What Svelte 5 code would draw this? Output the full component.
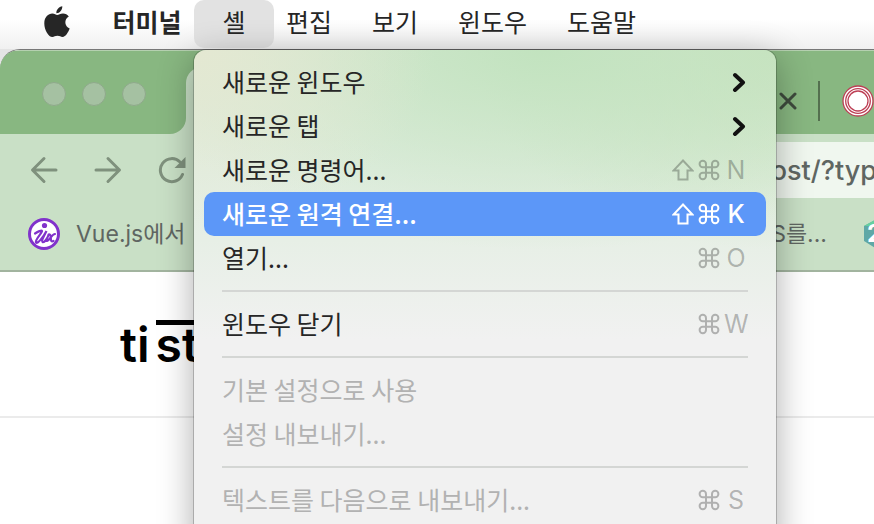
<script lang="ts">
	type MenuItem = {
		label: string;
		keys?: string;
		shift?: boolean;
		submenu?: boolean;
		disabled?: boolean;
	};

	let selected = $state('새로운 원격 연결...');

	const menus = ['편집', '보기', '윈도우', '도움말'];

	// each group is followed by a separator
	const groups: MenuItem[][] = [
		[
			{ label: '새로운 윈도우', submenu: true },
			{ label: '새로운 탭', submenu: true },
			{ label: '새로운 명령어...', keys: 'N', shift: true },
			{ label: '새로운 원격 연결...', keys: 'K', shift: true },
			{ label: '열기...', keys: 'O' }
		],
		[{ label: '윈도우 닫기', keys: 'W' }],
		[
			{ label: '기본 설정으로 사용', disabled: true },
			{ label: '설정 내보내기...', disabled: true }
		],
		[{ label: '텍스트를 다음으로 내보내기...', keys: 'S', disabled: true }]
	];
</script>

<div class="desktop">
	<header class="menubar">
		<button class="apple" aria-label="Apple">
			<svg viewBox="0 0 26 32" width="26" height="32">
				<path
					d="M18.3.2c.3 3.700-2.800 7.200-5.900 7C12 3.700 15 .7 18.300.2zM13.200 9c1.500 0 3-1.500 5.800-1.500 2.400 0 4.500 1.200 5.800 3-5.100 3-4.300 10 .9 12-1.200 3.200-4 8.500-7.200 8.500-1.900 0-2.600-1.200-5-1.200-2.500 0-3.300 1.200-5.100 1.200C4.700 31 .3 24.200.3 17.400c0-6.500 4.100-9.900 8-9.900C10.600 7.500 12 9 13.200 9z"
				/>
			</svg>
		</button>
		<button class="menu app">터미널</button>
		<div class="opened">
			<button class="menu active">셸</button>
			<div class="dropdown">
				{#each groups as group}
					<ul>
						{#each group as item}
							<li>
								<button
									class="item"
									class:selected={item.label === selected}
									disabled={item.disabled}
									onmouseenter={() => (selected = item.label)}
								>
									<span class="label">{item.label}</span>
									{#if item.submenu}
										<svg class="chevron" viewBox="0 0 14 20" width="14" height="20">
											<path d="M3 3l8 7.500-8 7.500" />
										</svg>
									{/if}
									{#if item.keys}
										<span class="keys">
											{#if item.shift}
												<svg viewBox="0 0 22 22" width="22" height="22">
													<path d="M11 1.500L20.500 11.500H15.500V20.500H6.500V11.500H1.500z" />
												</svg>
											{/if}
											<svg viewBox="0 0 22 22" width="22" height="22">
												<path
													d="M8 8V5a3.200 3.200 0 1 0-3.200 3.200H17.200A3.200 3.200 0 1 0 14 5V17a3.200 3.200 0 1 0 3.200-3.200H4.800A3.200 3.200 0 1 0 8 17z"
												/>
											</svg>
											<kbd>{item.keys}</kbd>
										</span>
									{/if}
								</button>
							</li>
						{/each}
					</ul>
				{/each}
			</div>
		</div>
		{#each menus as menu}
			<button class="menu">{menu}</button>
		{/each}
	</header>

	<main class="browser">
		<div class="tabs">
			<div class="lights">
				<i></i>
				<i></i>
				<i></i>
			</div>
			<div class="tab"></div>
			<div class="rest">
				<button class="close" aria-label="닫기">
					<svg viewBox="0 0 18 18" width="18" height="18">
						<path d="M2 2l14 14M16 2L2 16" />
					</svg>
				</button>
				<span class="divider"></span>
				<svg class="favicon" viewBox="0 0 32 32" width="32" height="32">
					<circle cx="16" cy="16" r="15" />
					<circle cx="16" cy="16" r="12.300" />
					<circle cx="16" cy="16" r="10" />
				</svg>
			</div>
		</div>
		<div class="toolbar">
			<div class="nav">
				<button aria-label="뒤로">
					<svg viewBox="0 0 28 28" width="28" height="28">
						<path d="M26 14H3M14 2.500L2.500 14 14 25.500" />
					</svg>
				</button>
				<button aria-label="앞으로">
					<svg viewBox="0 0 28 28" width="28" height="28">
						<path d="M2 14H25M14 2.500L25.500 14 14 25.500" />
					</svg>
				</button>
				<button aria-label="새로고침">
					<svg viewBox="0 0 28 28" width="28" height="28">
						<path d="M24.500 18.500A11.500 11.500 0 1 1 22 6" />
						<path class="tip" d="M27.500 1V12H16.500z" />
					</svg>
				</button>
			</div>
			<div class="address">post/?type</div>
		</div>
		<div class="bookmarks">
			<a href="#vue">
				<svg viewBox="0 0 32 32" width="32" height="32">
					<circle cx="16" cy="16" r="14.500" fill="#fff" stroke="#8132cb" stroke-width="3" />
					<circle cx="16.500" cy="7.500" r="2.600" fill="#8132cb" />
					<path
						d="M7 15.500c3-2 6.500-3.500 7-2.500C14.500 14.500 6.500 22 8 24.500c1.500 2 8-6.500 10.500-11.500-3 6-5.500 10-4 11 2 1 5-4 6-7M20.500 16.500c4.500-1 0 8.500 5 6.500M27 16c-3.500 0-5.500 7.500-9 7"
						fill="none"
						stroke="#8132cb"
						stroke-width="2.200"
						stroke-linecap="round"
					/>
				</svg>
				<span>Vue.js에서</span>
			</a>
			<a href="#js" class="right">
				<span>JS를...</span>
				<svg viewBox="0 0 28 32" width="28" height="32">
					<path d="M14 1L27 8V23L14 31 1 23V8z" fill="#5fa8a6" />
					<path d="M14 1L27 8H1z" fill="#66cf9f" />
					<text x="4" y="24">2</text>
				</svg>
			</a>
		</div>
		<section class="page">
			<div class="logo">ti<span>st</span></div>
		</section>
	</main>
</div>

<style>
	:global(body) {
		margin: 0;
	}
	.desktop {
		min-height: 100vh;
		display: flex;
		flex-direction: column;
		overflow: hidden;
		position: relative;
		background: #e4e4e4;
		font-family: Inter, 'Noto Sans CJK KR', sans-serif;
		font-size: 25px;
		color: #262626;
	}
	button {
		border: 0;
		padding: 0;
		background: none;
		font: inherit;
		color: inherit;
	}
	svg {
		display: block;
		flex: none;
	}
	ul {
		list-style: none;
		margin: 0;
		padding: 0;
	}

	.menubar {
		display: flex;
		height: 49px;
		padding-left: 44px;
		background: linear-gradient(#fff 40%, #f0f0f0);
	}
	.apple {
		width: 26px;
		margin-right: 30px;
		padding-bottom: 6px;
		fill: #262626;
	}
	.menu {
		height: 48px;
		padding: 0 12px 6px;
		white-space: nowrap;
		flex: none;
		margin-right: 16px;
	}
	.app {
		width: 94px;
		margin-right: 0;
		font-weight: 700;
	}
	.opened {
		position: relative;
		flex: none;
	}
	.active {
		width: 80px;
		margin: 0;
		border-radius: 10px;
		background: #e2e2e2;
	}

	.dropdown {
		position: absolute;
		z-index: 1;
		top: 50px;
		left: 0;
		box-sizing: border-box;
		width: 582px;
		padding: 10px 10px 32px;
		border-radius: 12px;
		background:
			radial-gradient(ellipse 240px 180px at 0 0, #e4e8d2, transparent),
			radial-gradient(ellipse 420px 200px at 60% 0, #c2e3bf, transparent),
			radial-gradient(ellipse 300px 200px at 100% 0, #c9e3c0, transparent),
			linear-gradient(#dcead9, #e3eee2 120px, #e7efe6 190px, #f1f1f1 290px);
		box-shadow:
			0 0 0 1px #0003,
			0 8px 36px #0005;
	}
	ul + ul::before {
		content: '';
		display: block;
		height: 2px;
		margin: 10px 18px;
		background: #d4d6d4;
	}
	.item {
		display: flex;
		align-items: center;
		justify-content: space-between;
		width: 100%;
		height: 44px;
		padding: 0 18px;
		border-radius: 10px;
		white-space: nowrap;
	}
	.item:disabled {
		color: #b2b2b2;
	}
	.item.selected {
		background: #5c97f8;
		color: #fff;
		font-weight: 500;
	}
	.label {
		padding-bottom: 2px;
		font-family: 'Noto Sans CJK KR', sans-serif;
		line-height: 36px;
	}
	.chevron {
		margin-right: 2px;
		fill: none;
		stroke: #111;
		stroke-width: 4;
		stroke-linecap: round;
		stroke-linejoin: round;
	}
	.keys {
		display: flex;
		align-items: center;
		gap: 4px;
		color: #0004;
	}
	.selected .keys {
		color: #fff;
	}
	.keys svg {
		fill: none;
		stroke: currentColor;
		stroke-width: 2;
	}
	kbd {
		width: 24px;
		font-family: inherit;
		text-align: center;
	}

	.browser {
		flex: 1;
		display: flex;
		flex-direction: column;
		overflow: hidden;
		border-top: 1px solid #777;
		border-radius: 20px 0 0 0;
		background: #fff;
		color: #5f6662;
	}
	.tabs {
		box-sizing: border-box;
		display: flex;
		height: 84px;
		border-top: 1px solid #b5d0b0;
		background: linear-gradient(#88b781 50%, #c9e0c6 50%);
	}
	.lights {
		box-sizing: border-box;
		display: flex;
		gap: 16px;
		width: 186px;
		padding: 31px 0 0 42px;
		border-radius: 0 0 16px 0;
		background: #88b781;
	}
	.lights i {
		box-sizing: border-box;
		width: 24px;
		height: 24px;
		border: 1px solid #8fa98b;
		border-radius: 50%;
		background: #a5c1a2;
	}
	.tab {
		flex: 1;
		margin-top: 16px;
		border-radius: 16px 16px 0 0;
		background: #c9e0c6;
	}
	.rest {
		box-sizing: border-box;
		display: flex;
		align-items: center;
		width: 108px;
		padding: 16px 0 0 13px;
		background: #88b781;
	}
	.close {
		margin-right: 21px;
		stroke: #3e4b3d;
		stroke-width: 3;
		stroke-linecap: round;
	}
	.divider {
		width: 2px;
		height: 40px;
		margin-right: 22px;
		background: #54704f;
	}
	.favicon {
		fill: #fff;
		stroke: #bd3f55;
		stroke-width: 1.3;
	}

	.toolbar {
		display: flex;
		justify-content: space-between;
		height: 64px;
		padding-top: 8px;
		box-sizing: border-box;
		background: #c9e0c6;
	}
	.nav {
		display: flex;
		gap: 36px;
		padding-left: 30px;
		fill: none;
		stroke: #7f917d;
		stroke-width: 3;
		stroke-linecap: round;
		stroke-linejoin: round;
	}
	.tip {
		fill: #7f917d;
		stroke: none;
	}
	.address {
		box-sizing: border-box;
		width: 120px;
		overflow: hidden;
		background: #f0f7ef;
		font-size: 27px;
		font-weight: 500;
		line-height: 58px;
		white-space: nowrap;
	}
	.bookmarks {
		box-sizing: border-box;
		display: flex;
		justify-content: space-between;
		height: 74px;
		padding-left: 28px;
		border-bottom: 2px solid #a2b49f;
		background: #c9e0c6;
	}
	.bookmarks a {
		display: flex;
		align-items: center;
		gap: 16px;
		color: inherit;
		font-size: 23px;
		text-decoration: none;
		white-space: nowrap;
	}
	.bookmarks span {
		padding-bottom: 4px;
	}
	.bookmarks .right {
		gap: 36px;
		width: 116px;
	}
	.bookmarks text {
		fill: #fff;
		font-size: 24px;
		font-weight: 700;
	}

	.page {
		height: 96px;
		padding: 48px 0 0 120px;
		border-bottom: 2px solid #ebebeb;
	}
	.logo {
		display: flex;
		gap: 6px;
		color: #000;
		font-size: 48px;
		font-weight: 600;
		line-height: 50px;
	}
	.logo span {
		border-top: 5px solid #000;
		line-height: 40px;
	}
</style>
